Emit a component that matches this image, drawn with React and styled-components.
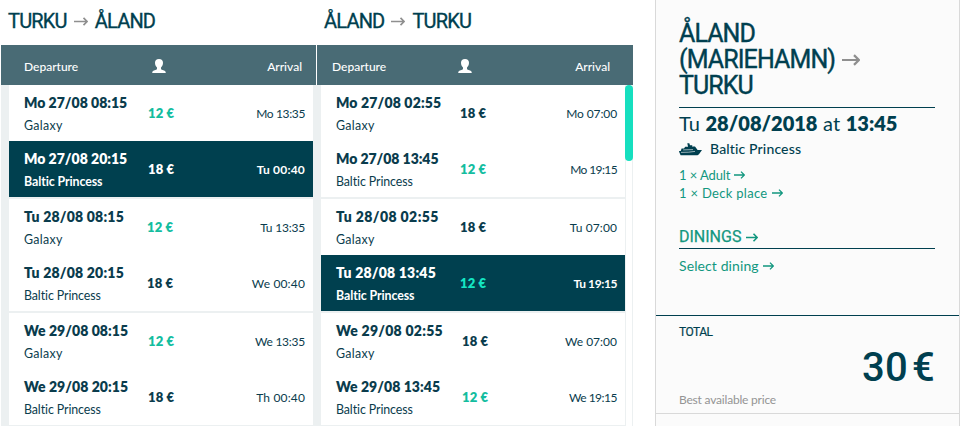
import styled, { createGlobalStyle } from "styled-components";

const days = [
  {
    id: "mo",
    outbound: [
      { date: "Mo 27/08 08:15", ship: "Galaxy", price: 12, arrival: "Mo 13:35", tight: -0.35 },
      { date: "Mo 27/08 20:15", ship: "Baltic Princess", price: 18, arrival: "Tu 00:40", tight: 0.2, selected: true },
    ],
    inbound: [
      { date: "Mo 27/08 02:55", ship: "Galaxy", price: 18, arrival: "Mo 07:00", tight: -0.1, spread: 0.15 },
      { date: "Mo 27/08 13:45", ship: "Baltic Princess", price: 12, arrival: "Mo 19:15", tight: -0.6, spread: -0.05 },
    ],
    outboundColumn: 124,
    inboundColumn: 124,
  },
  {
    id: "tu",
    outbound: [
      { date: "Tu 28/08 08:15", ship: "Galaxy", price: 12, arrival: "Tu 13:35", tight: -0.2, spread: 0.2 },
      { date: "Tu 28/08 20:15", ship: "Baltic Princess", price: 18, arrival: "We 00:40", tight: 0.15, spread: 0.2 },
    ],
    inbound: [
      { date: "Tu 28/08 02:55", ship: "Galaxy", price: 18, arrival: "Tu 07:00", tight: 0.1, spread: 0.4 },
      { date: "Tu 28/08 13:45", ship: "Baltic Princess", price: 12, arrival: "Tu 19:15", tight: -0.4, spread: 0.2, selected: true },
    ],
    outboundColumn: 123,
    inboundColumn: 124,
  },
  {
    id: "we",
    outbound: [
      { date: "We 29/08 08:15", ship: "Galaxy", price: 12, arrival: "We 13:35", tight: -0.25, spread: 0.05 },
      { date: "We 29/08 20:15", ship: "Baltic Princess", price: 18, arrival: "Th 00:40", tight: 0.15, spread: 0.05 },
    ],
    inbound: [
      { date: "We 29/08 02:55", ship: "Galaxy", price: 18, arrival: "We 07:00", tight: 0, spread: 0.25 },
      { date: "We 29/08 13:45", ship: "Baltic Princess", price: 12, arrival: "We 19:15", tight: -0.5, spread: 0.05 },
    ],
    outboundColumn: 124,
    inboundColumn: 126,
  },
];

function Arrow({ width = 11, height = 8, stroke = 1.3 }) {
  const middle = height / 2;
  const head = middle - stroke / 2;
  const tip = width - stroke / 2;
  return (
    <ArrowIcon width={width} height={height} $stroke={stroke}>
      <path d={`M0 ${middle}H${tip}M${tip - head} ${middle - head}L${tip} ${middle}L${tip - head} ${middle + head}`} />
    </ArrowIcon>
  );
}

function PersonIcon() {
  return (
    <svg width="14" height="14" viewBox="0 0 14 14" fill="#fff">
      <path d="M7 0C9.6 0 11 1.4 11 3.8C11 5.8 10.2 7.4 9 8.4V9.6C9 10.4 9.4 10.8 10.6 11.1C12.8 11.6 13.7 12.2 13.8 14H.2C.3 12.2 1.2 11.6 3.4 11.1C4.6 10.8 5 10.4 5 9.6V8.4C3.8 7.4 3 5.8 3 3.8C3 1.4 4.4 0 7 0Z" />
    </svg>
  );
}

function ShipIcon() {
  return (
    <svg width="23" height="13" viewBox="0 0 23 13">
      <path
        fill="#003f4f"
        d="M8.3 0.3H10.3L11 2.2H13.4L13 3.4H16L17.3 5.2L18.6 6.9L23 7.1L20.5 10.4C19.8 11.6 19 12.2 17.5 12.2H1.6L.3 9.3L0 8H1.7L2.6 5.6H5L6.2 3.7H9Z"
      />
      <path stroke="#fbfbfb" strokeWidth="0.6" d="M4.2 6.9L14 6.6M2 9.4L9.5 9.2L16 8.4" fill="none" />
    </svg>
  );
}

function SailingRow({ sailing, column }) {
  const { date, ship, price, arrival, tight, spread, selected } = sailing;
  return (
    <Sailing $selected={selected} $column={column}>
      <div>
        <DepartureTime $spread={spread}>{date}</DepartureTime>
        <ShipName $spread={ship === "Galaxy" ? 0.3 : -0.1}>{ship}</ShipName>
      </div>
      <Price $cheap={price === 12} $selected={selected}>
        {price} €
      </Price>
      <ArrivalTime $tight={tight}>{arrival}</ArrivalTime>
    </Sailing>
  );
}

function SailingList({ direction }) {
  return (
    <List>
      {days.map((day) => (
        <Day key={day.id}>
          {day[direction].map((sailing) => (
            <SailingRow key={sailing.date} sailing={sailing} column={day[`${direction}Column`]} />
          ))}
        </Day>
      ))}
    </List>
  );
}

export default function App() {
  return (
    <>
      <GlobalStyle />
      <Page>
        <Timetable>
          <Titles>
            <Title>
              TURKU <Arrow width={14} height={9} stroke={1.7} /> ÅLAND
            </Title>
            <Title>
              ÅLAND <Arrow width={14} height={9} stroke={1.7} /> TURKU
            </Title>
          </Titles>
          <Headers>
            <Header $left={23} $icon={128} $right={14}>
              <span>Departure</span>
              <PersonIcon />
              <span>Arrival</span>
            </Header>
            <Header $left={15} $icon={126} $right={23}>
              <span>Departure</span>
              <PersonIcon />
              <span>Arrival</span>
            </Header>
          </Headers>
          <Lists>
            <SailingList direction="outbound" />
            <SailingList direction="inbound" />
            <ScrollTrack>
              <ScrollThumb />
            </ScrollTrack>
          </Lists>
        </Timetable>

        <Summary>
          <Trip>
            <RouteTitle>
              <div>ÅLAND</div>
              <RouteStop>
                (MARIEHAMN) <Arrow width={18} height={12} stroke={2.2} />
              </RouteStop>
              <div>TURKU</div>
            </RouteTitle>
            <TripDate>
              Tu <b>28/08/2018</b> at <b>13:45</b>
            </TripDate>
            <TripShip>
              <ShipIcon />
              Baltic Princess
            </TripShip>
            <Links>
              <TextLink $spread={-0.1}>
                1 × Adult <Arrow />
              </TextLink>
              <TextLink $spread={0.3}>
                1 × Deck place <Arrow />
              </TextLink>
            </Links>
            <DiningTitle>
              DININGS <Arrow width={12} height={9} stroke={1.6} />
            </DiningTitle>
            <DiningLink $spread={0.1}>
              Select dining <Arrow />
            </DiningLink>
          </Trip>
          <Total>
            <TotalLabel>TOTAL</TotalLabel>
            <Amount>
              <span>30</span>
              <span>€</span>
            </Amount>
            <Note>Best available price</Note>
          </Total>
        </Summary>
      </Page>
    </>
  );
}

const GlobalStyle = createGlobalStyle`
  * {
    box-sizing: border-box;
  }

  body {
    margin: 0;
    background: #fff;
    color: #003f4f;
    font-family: Lato, sans-serif;
    overflow: hidden;
  }

  svg {
    display: block;
    flex-shrink: 0;
  }
`;

const Page = styled.div`
  display: flex;
  height: 426px;
  overflow: hidden;
`;

const Timetable = styled.main`
  width: 632px;
  margin: 0 22px 0 1px;
  flex-shrink: 0;
`;

const Titles = styled.div`
  display: grid;
  grid-template-columns: 316px 1fr;
  height: 45px;
  padding: 9px 0 0 7px;
`;

const Title = styled.h2`
  display: flex;
  align-items: center;
  gap: 7px;
  height: 25px;
  margin: 0;
  font: 400 20px/25px Roboto, sans-serif;
  letter-spacing: -0.8px;
  -webkit-text-stroke: 0.35px currentColor;
`;

const ArrowIcon = styled.svg`
  fill: none;
  stroke: currentColor;
  stroke-width: ${({ $stroke }) => $stroke}px;

  h2 & {
    color: #8f8f8f;
  }
`;

const Headers = styled.div`
  display: grid;
  grid-template-columns: 315px 316px;
  gap: 1px;
  height: 40px;
`;

const Header = styled.div`
  display: grid;
  grid-template-columns: ${({ $icon }) => $icon}px 1fr auto;
  align-items: center;
  padding: 3px ${({ $right }) => $right}px 0 ${({ $left }) => $left}px;
  background: #496b75;
  color: #fff;
  font-size: 12px;
  font-weight: 500;

  svg {
    margin-top: -1px;
  }
`;

const Lists = styled.div`
  display: grid;
  grid-template-columns: 304px 304px 8px;
  column-gap: 8px;
  height: 341px;
  padding-left: 8px;
  background: #ecf0f1;

  & > :last-child {
    margin-left: -8px;
  }
`;

const List = styled.div`
  display: flex;
  flex-direction: column;
  gap: 2px;
`;

const Day = styled.div`
  background: #fff;
`;

const Sailing = styled.div`
  display: grid;
  grid-template-columns: ${({ $column }) => $column}px 1fr auto;
  align-items: center;
  height: 56px;
  padding: 0 8px 0 15px;
  background: ${({ $selected }) => ($selected ? "#00404f" : "#fff")};
  color: ${({ $selected }) => ($selected ? "#fff" : "#0a3c4d")};
  font-weight: ${({ $selected }) => ($selected ? 700 : 400)};
`;

const DepartureTime = styled.div`
  padding-top: 3px;
  margin-bottom: 3px;
  font-size: 14px;
  font-weight: 800;
  line-height: 20px;
  letter-spacing: ${({ $spread = 0 }) => $spread}px;
  white-space: nowrap;
`;

const ShipName = styled.div`
  font-size: 12.4px;
  line-height: 20px;
  letter-spacing: ${({ $spread }) => $spread}px;
`;

const Price = styled.div`
  font-size: 13px;
  font-weight: 800;
  letter-spacing: 0.15px;
  color: ${({ $cheap, $selected }) => ($cheap ? ($selected ? "#14e6c3" : "#14bd9f") : "inherit")};
`;

const ArrivalTime = styled.div`
  font-size: 12px;
  letter-spacing: ${({ $tight }) => $tight}px;
`;

const ScrollTrack = styled.div`
  width: 8px;
  background: #fff;
  border: solid #ecf0f1;
  border-width: 0 1px;
`;

const ScrollThumb = styled.div`
  width: 8px;
  height: 76px;
  margin-left: -1px;
  border-radius: 4px;
  background: #16dfbf;
`;

const Summary = styled.aside`
  display: flex;
  flex-direction: column;
  width: 305px;
  background: #fbfbfb;
  border: solid #d9d9d9;
  border-width: 0 1px;
`;

const Trip = styled.section`
  height: 315px;
  padding: 21px 24px 0 23px;
`;

const RouteTitle = styled.h2`
  margin: 0;
  padding-bottom: 8px;
  border-bottom: 1px solid #003f4f;
  font: 400 25px/26px Roboto, sans-serif;
  letter-spacing: -0.9px;
  -webkit-text-stroke: 0.4px currentColor;
`;

const RouteStop = styled.div`
  display: flex;
  align-items: center;
  gap: 7px;
`;

const TripDate = styled.div`
  padding-top: 2px;
  font-size: 20px;
  line-height: 26px;
  word-spacing: 0.5px;

  b {
    font-weight: 800;
  }
`;

const TripShip = styled.div`
  display: flex;
  align-items: center;
  gap: 8px;
  margin-top: 3px;
  font-size: 14px;
  font-weight: 500;
  line-height: 20px;
  letter-spacing: 0.15px;
`;

const Links = styled.div`
  margin-top: 7px;
`;

const TextLink = styled.div`
  display: flex;
  align-items: center;
  gap: 4px;
  color: #12977f;
  font-size: 13px;
  line-height: 18px;
  letter-spacing: ${({ $spread }) => $spread}px;
`;

const DiningTitle = styled.div`
  display: flex;
  align-items: center;
  gap: 5px;
  margin-top: 25px;
  padding-bottom: 1px;
  border-bottom: 1px solid #003f4f;
  color: #12977f;
  font: 400 16px/20px Roboto, sans-serif;
  -webkit-text-stroke: 0.25px currentColor;
`;

const DiningLink = styled(TextLink)`
  margin-top: 7px;
  font-size: 14px;
  line-height: 20px;
`;

const Total = styled.section`
  height: 99px;
  padding: 8px 24px 0 23px;
  border-top: 1px solid #003f4f;
  border-bottom: 1px solid #d9d9d9;
`;

const TotalLabel = styled.div`
  font: 400 12px/16px Roboto, sans-serif;
  letter-spacing: -0.5px;
  -webkit-text-stroke: 0.2px currentColor;
`;

const Amount = styled.div`
  display: flex;
  justify-content: flex-end;
  gap: 4px;
  margin-top: 6px;
  font: 500 40px/44px Roboto, sans-serif;
  letter-spacing: 0.3px;
`;

const Note = styled.div`
  margin-top: 2px;
  color: #949494;
  font-size: 12px;
  line-height: 16px;
  letter-spacing: -0.2px;
`;
